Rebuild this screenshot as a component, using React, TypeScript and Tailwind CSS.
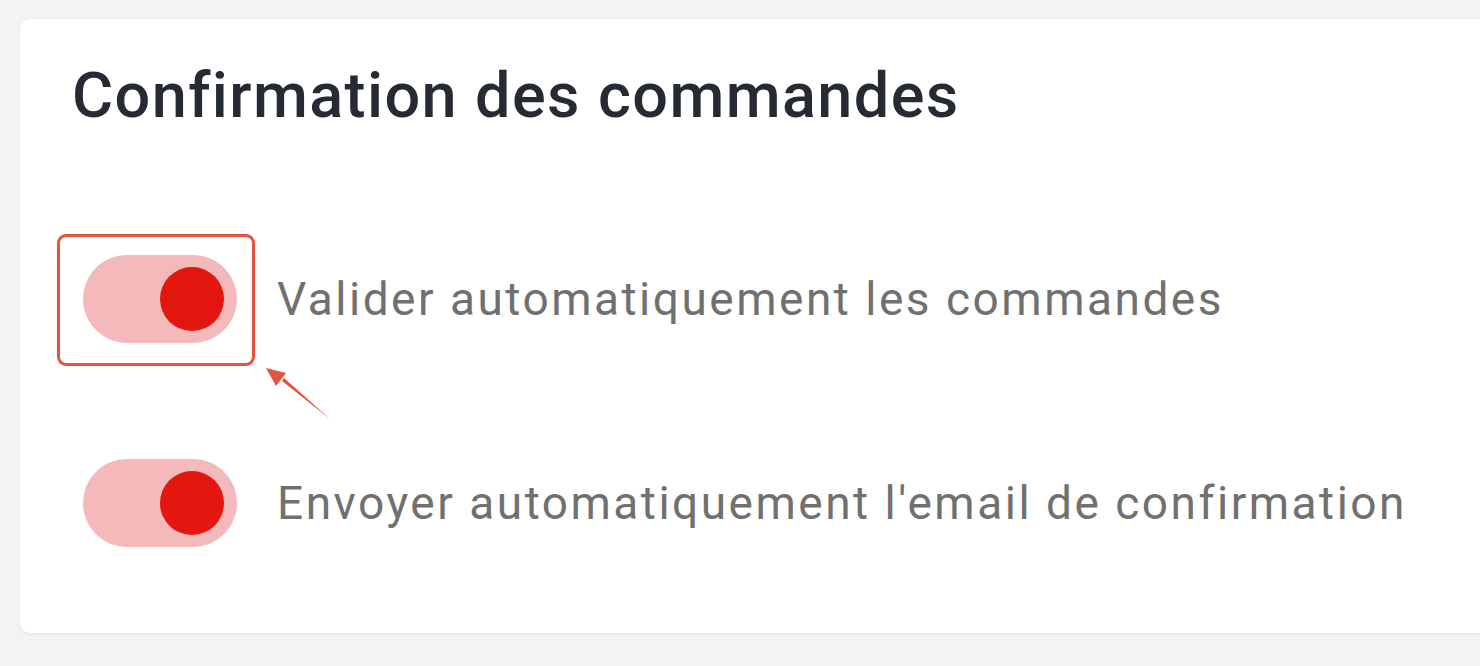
const rows = [
  { label: "Valider automatiquement les commandes", marked: true },
  { label: "Envoyer automatiquement l'email de confirmation", marked: false },
];

function Toggle() {
  return (
    <div className="flex h-[88px] w-[154px] shrink-0 items-center justify-end rounded-full bg-[#f4b9ba] pr-[13px]">
      <div className="h-[64px] w-[64px] rounded-full bg-[#e3170f]" />
    </div>
  );
}

export default function App() {
  return (
    <div className="h-[666px] w-[1480px] overflow-hidden bg-[#f2f3f3] pl-[20px] pt-[19px] font-['Roboto',sans-serif]">
      <div className="relative h-[614px] w-[1500px] rounded-[10px] bg-white shadow-[0_1px_4px_rgba(0,0,0,0.06)]">
        <h2 className="pl-[52px] pt-[45px] text-[63px] font-medium leading-none tracking-[1.4px] text-[#252a33]">
          Confirmation des commandes
        </h2>
        <div className="mt-[128px] flex flex-col gap-[116px] pl-[63px]">
          {rows.map((r) => (
            <div key={r.label} className="relative flex items-center gap-[40px]">
              <Toggle />
              <span className="text-[46px] leading-none tracking-[2.5px] text-[#707070]">{r.label}</span>
              {r.marked && (
                <>
                  <div className="absolute left-[-26px] top-[-21px] h-[132px] w-[198px] rounded-[9px] border-[3px] border-[#e5533d]" />
                  <svg
                    className="absolute left-[180px] top-[112px]"
                    width="80"
                    height="60"
                    viewBox="0 0 80 60"
                  >
                    <polygon points="67,52 19,14 21,11" fill="#e5533d" />
                    <polygon points="3,1 23,6 13,19" fill="#e5533d" />
                  </svg>
                </>
              )}
            </div>
          ))}
        </div>
      </div>
    </div>
  );
}
